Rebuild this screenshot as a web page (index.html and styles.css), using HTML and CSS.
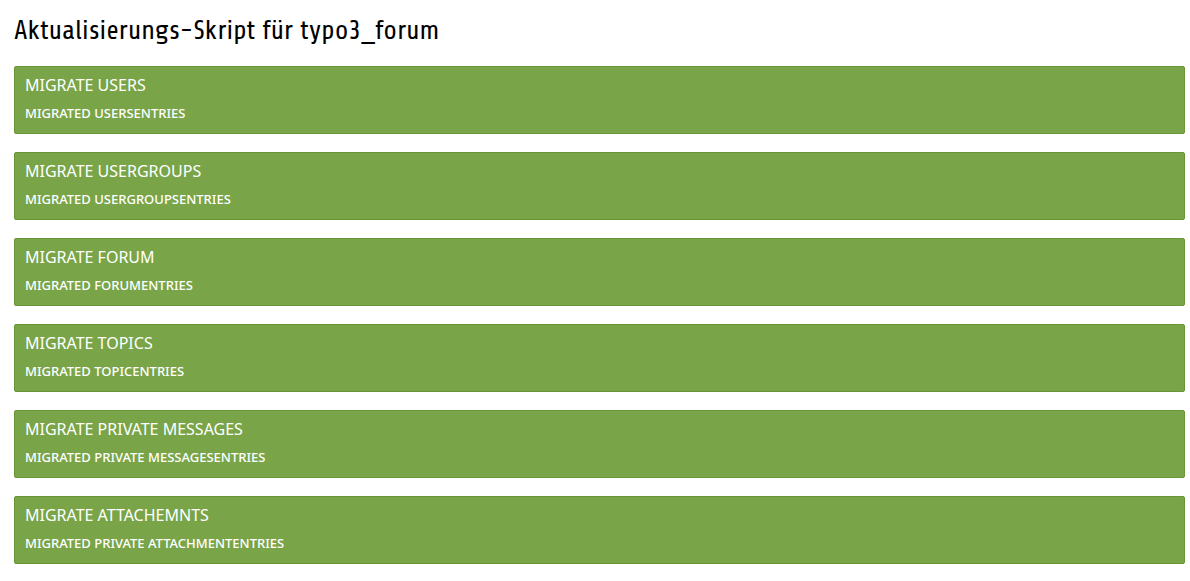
FILE: index.html
```
<!DOCTYPE html>
<html lang="de">
<head>
<meta charset="utf-8">
<title>typo3_forum</title>
<link rel="stylesheet" href="styles.css">
</head>
<body>
<main class="module">
<h1 class="title">Aktualisierungs-Skript für typo3_forum</h1>
<div class="messages">
<section class="message"><h2 class="message-title">Migrate Users</h2><p class="message-body">Migrated usersentries</p></section>
<section class="message"><h2 class="message-title">Migrate Usergroups</h2><p class="message-body">Migrated usergroupsentries</p></section>
<section class="message"><h2 class="message-title">Migrate Forum</h2><p class="message-body">Migrated forumentries</p></section>
<section class="message"><h2 class="message-title">Migrate Topics</h2><p class="message-body">Migrated topicentries</p></section>
<section class="message"><h2 class="message-title">Migrate Private Messages</h2><p class="message-body">Migrated private messagesentries</p></section>
<section class="message"><h2 class="message-title">Migrate Attachemnts</h2><p class="message-body">Migrated private attachmententries</p></section>
</div>
</main>
</body>
</html>
```
FILE: styles.css
```
body {
  margin: 0;
  background: #fff;
  color: #000;
  font-family: "Noto Sans", Verdana, sans-serif;
}
.module {
  padding: 15px 5px 17px 14px;
}
.title {
  margin: 0 0 19px;
  font: 400 27px/32px Share, "Share Tech", "DejaVu Sans Condensed", sans-serif;
}
.messages {
  display: grid;
  gap: 18px;
}
.message {
  padding: 10px 10px 12px;
  border: 1px solid #6a9438;
  border-radius: 2px;
  background: #79a548;
  color: #fff;
  text-transform: uppercase;
}
.message-title {
  margin: 0 0 12px;
  font-size: 16px;
  font-weight: 400;
  line-height: 16px;
}
.message-body {
  margin: 0;
  font-size: 13px;
  font-weight: 500;
  line-height: 16px;
}
```
